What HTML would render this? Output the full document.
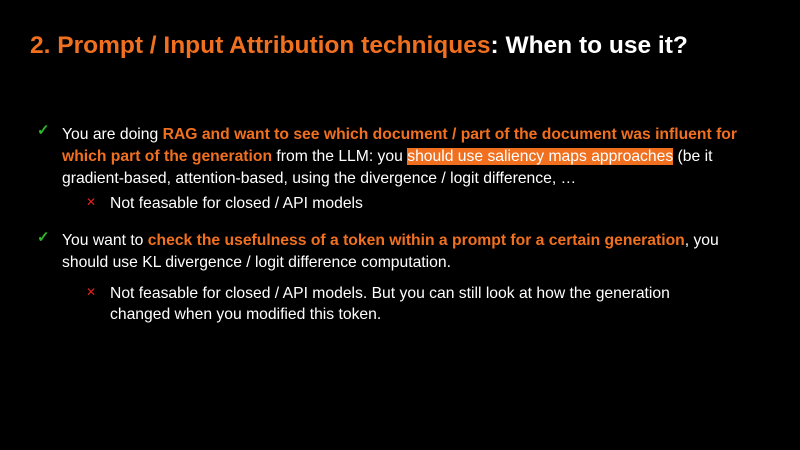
<!DOCTYPE html>
<html><head><meta charset="utf-8"><style>
body{margin:0;width:800px;height:450px;background:#000;overflow:hidden;font-family:"Liberation Sans",sans-serif;color:#fff;position:relative}
.t{position:absolute;left:30px;top:32px;font-size:24.5px;font-weight:bold;white-space:nowrap}
.o{color:#f07020;font-weight:bold}
.l{position:absolute;white-space:nowrap;font-size:15.7px;line-height:22px}
.hl{background:#f07020;color:#fff}
.ck{position:absolute;color:#2db82d;font-size:15px;font-weight:bold}
.x{position:absolute;color:#e02020;font-size:12px}
</style></head><body>
<div class="t"><span class="o">2. Prompt / Input Attribution techniques</span>: When to use it?</div>
<div class="ck" style="left:37px;top:121px">✓</div>
<div class="l" style="left:62px;top:124px">You are doing <span class="o">RAG and want to see which document / part of the document was influent for</span></div>
<div class="l" style="left:62px;top:146px"><span class="o">which part of the generation</span> from the LLM: you <span class="hl">should use saliency maps approaches</span> (be it</div>
<div class="l" style="left:62px;top:168px">gradient-based, attention-based, using the divergence / logit difference, …</div>
<div class="x" style="left:86px;top:195px">✕</div>
<div class="l" style="left:110px;top:193px">Not feasable for closed / API models</div>
<div class="ck" style="left:37px;top:228px">✓</div>
<div class="l" style="left:62px;top:230px">You want to <span class="o">check the usefulness of a token within a prompt for a certain generation</span>, you</div>
<div class="l" style="left:62px;top:252px">should use KL divergence / logit difference computation.</div>
<div class="x" style="left:86px;top:285px">✕</div>
<div class="l" style="left:110px;top:283px">Not feasable for closed / API models. But you can still look at how the generation</div>
<div class="l" style="left:110px;top:304px">changed when you modified this token.</div>
</body></html>
